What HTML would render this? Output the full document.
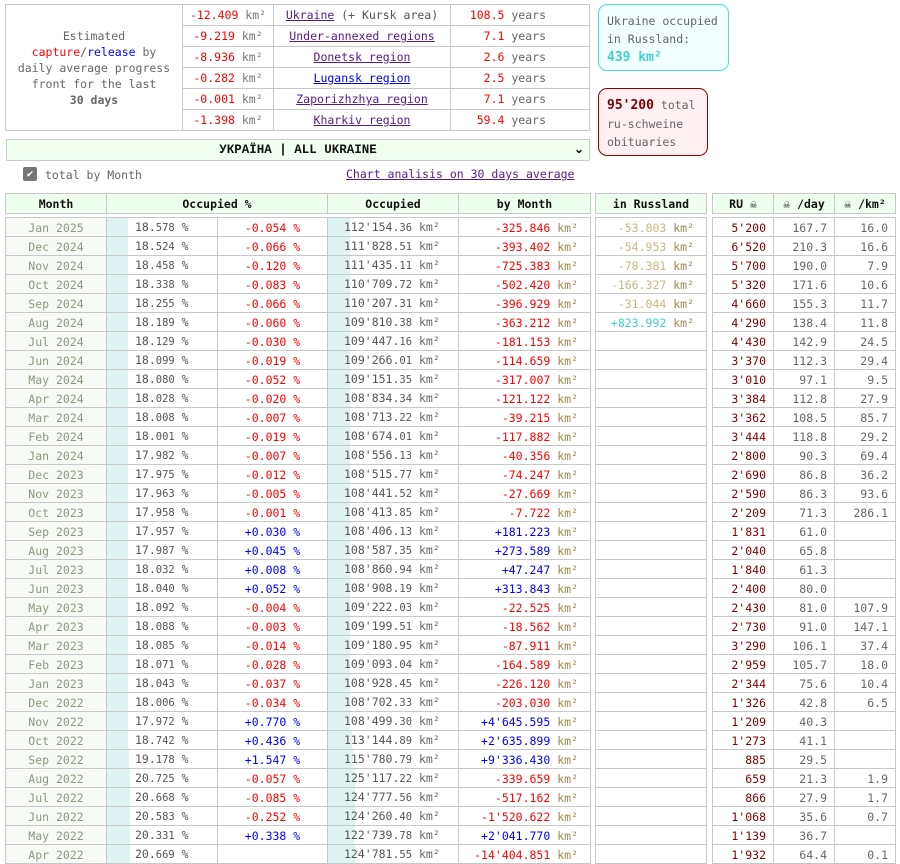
<!DOCTYPE html>
<html><head><meta charset="utf-8">
<style>
*{box-sizing:border-box}
body{margin:0;background:#fff;font-family:"DejaVu Sans Mono","Liberation Mono",monospace;font-size:11.5px;color:#555;width:900px;height:835px;overflow:hidden;position:relative}
.abs{position:absolute}
table{border-collapse:collapse;table-layout:fixed}
td{border:1px solid #c8c8c8;padding:0;white-space:nowrap;overflow:hidden}
#top{left:5px;top:4px;width:585px}
#top td{height:21px;line-height:20px}
#top .l{width:177px;text-align:center;color:#666;line-height:16px}
#top .v{width:91px;text-align:center;color:#f00}
#top .n{width:177px;text-align:center}
#top .y{text-align:right;padding-right:43px;color:#666}
#top .y b{color:#f00;font-weight:normal}
a{color:#551a8b;text-decoration:underline}
a.bl{color:#0000ee}
.km{color:#777}
.box{border-radius:9px;padding:7px 8px;line-height:18px;font-size:11.5px;color:#666}
#sel{left:6px;top:139px;width:584px;height:22px;background:#f0fff0;border:1px solid #ccc;font-family:"Liberation Mono",monospace;font-weight:bold;font-size:12.5px;color:#111;text-align:center;line-height:20px}
#hd,#bd{left:5px;width:890px}
#hd{top:193px}
#bd{top:217px}
#hd td{height:20px;background:#efffef;text-align:center;font-weight:bold;color:#111;line-height:18px}
#bd td{height:18px;line-height:16px;padding-top:1px}
#bd tr{height:18px}
td.g{border-top:0;border-bottom:0;background:#fff}
#hd td.g{background:#fff}
.m{text-align:center;color:#8a9a80;background:#f8faf5}
.p{text-align:left;padding-left:28px;color:#555;background:linear-gradient(#dff3f3,#dff3f3) no-repeat;background-size:21px 100%}
.c{text-align:center}
.o{text-align:left;padding-left:16px;color:#555;background:linear-gradient(#dff3f3,#dff3f3) no-repeat;background-size:22px 100%}
.b{text-align:right;padding-right:12px}
.r{text-align:right;padding-right:12px;color:#c8b880}
.u{text-align:right;padding-right:7px;color:#800000;font-weight:normal}
.d,.k{text-align:right;padding-right:7px;color:#666}
.s{font-size:10.5px}
.R{color:#f00}.B{color:#00f}
.b .km,.r .km{color:#a08850}
.o .km{color:#666}
.t{color:#40d0d0}
</style></head><body>
<table id="top" class="abs">
<tr><td class="l" rowspan="6">Estimated<br><span style="color:#f00">capture</span>/<span style="color:#00f">release</span> by<br>daily average progress<br>front for the last<br><b>30 days</b></td><td class="v">-12.409 <span class="km">km²</span></td><td class="n"><a>Ukraine</a> (+ Kursk area)</td><td class="y"><b>108.5</b> years</td></tr>
<tr><td class="v">-9.219 <span class="km">km²</span></td><td class="n"><a>Under-annexed regions</a></td><td class="y"><b>7.1</b> years</td></tr>
<tr><td class="v">-8.936 <span class="km">km²</span></td><td class="n"><a>Donetsk region</a></td><td class="y"><b>2.6</b> years</td></tr>
<tr><td class="v">-0.282 <span class="km">km²</span></td><td class="n"><a class="bl">Lugansk region</a></td><td class="y"><b>2.5</b> years</td></tr>
<tr><td class="v">-0.001 <span class="km">km²</span></td><td class="n"><a>Zaporizhzhya region</a></td><td class="y"><b>7.1</b> years</td></tr>
<tr><td class="v">-1.398 <span class="km">km²</span></td><td class="n"><a>Kharkiv region</a></td><td class="y"><b>59.4</b> years</td></tr>
</table>
<div class="abs box" style="left:598px;top:4px;width:131px;height:67px;border:1px solid #50e0d0;background:#f0ffff">Ukraine occupied in Russland:<br><b class="t" style="font-size:13px">439 km²</b></div>
<div class="abs box" style="left:598px;top:88px;width:110px;height:68px;border:1px solid #900000;background:#fff0f3"><b style="color:#800000;font-size:13px">95'200</b> total ru-schweine obituaries</div>
<div id="sel" class="abs">УКРАЇНА | ALL UKRAINE<span style="position:absolute;right:5px;top:0;font-size:12px">⌄</span></div>
<div class="abs" style="left:23px;top:167px;width:14px;height:14px;background:#777;border-radius:2px;color:#fff;font-size:11px;line-height:14px;text-align:center">✔</div>
<div class="abs" style="left:45px;top:167px;color:#666;line-height:16px">total by Month</div>
<div class="abs" style="left:346px;top:166px;line-height:16px"><a>Chart analisis on 30 days average</a></div>
<table id="hd" class="abs"><colgroup><col style="width:101px"><col style="width:221px"><col style="width:131px"><col style="width:132px"><col style="width:5px"><col style="width:111px"><col style="width:6px"><col style="width:61px"><col style="width:61px"><col style="width:61px"></colgroup>
<tr><td>Month</td><td>Occupied %</td><td>Occupied</td><td>by Month</td><td class="g"></td><td>in Russland</td><td class="g"></td><td>RU ☠</td><td>☠ /day</td><td>☠ /km²</td></tr></table>
<table id="bd" class="abs"><colgroup><col style="width:101px"><col style="width:111px"><col style="width:110px"><col style="width:131px"><col style="width:132px"><col style="width:5px"><col style="width:111px"><col style="width:6px"><col style="width:61px"><col style="width:61px"><col style="width:61px"></colgroup>
<tr><td class="m">Jan 2025</td><td class="p">18.<span class="s">578</span> %</td><td class="c R">-0.054 %</td><td class="o">112'154.<span class="s">36</span> <span class="km">km²</span></td><td class="b R">-325.846 <span class="km">km²</span></td><td class="g"></td><td class="r">-53.803 <span class="km">km²</span></td><td class="g"></td><td class="u">5'200</td><td class="d">167.7</td><td class="k">16.0</td></tr>
<tr><td class="m">Dec 2024</td><td class="p">18.<span class="s">524</span> %</td><td class="c R">-0.066 %</td><td class="o">111'828.<span class="s">51</span> <span class="km">km²</span></td><td class="b R">-393.402 <span class="km">km²</span></td><td class="g"></td><td class="r">-54.953 <span class="km">km²</span></td><td class="g"></td><td class="u">6'520</td><td class="d">210.3</td><td class="k">16.6</td></tr>
<tr><td class="m">Nov 2024</td><td class="p">18.<span class="s">458</span> %</td><td class="c R">-0.120 %</td><td class="o">111'435.<span class="s">11</span> <span class="km">km²</span></td><td class="b R">-725.383 <span class="km">km²</span></td><td class="g"></td><td class="r">-78.381 <span class="km">km²</span></td><td class="g"></td><td class="u">5'700</td><td class="d">190.0</td><td class="k">7.9</td></tr>
<tr><td class="m">Oct 2024</td><td class="p">18.<span class="s">338</span> %</td><td class="c R">-0.083 %</td><td class="o">110'709.<span class="s">72</span> <span class="km">km²</span></td><td class="b R">-502.420 <span class="km">km²</span></td><td class="g"></td><td class="r">-166.327 <span class="km">km²</span></td><td class="g"></td><td class="u">5'320</td><td class="d">171.6</td><td class="k">10.6</td></tr>
<tr><td class="m">Sep 2024</td><td class="p">18.<span class="s">255</span> %</td><td class="c R">-0.066 %</td><td class="o">110'207.<span class="s">31</span> <span class="km">km²</span></td><td class="b R">-396.929 <span class="km">km²</span></td><td class="g"></td><td class="r">-31.044 <span class="km">km²</span></td><td class="g"></td><td class="u">4'660</td><td class="d">155.3</td><td class="k">11.7</td></tr>
<tr><td class="m">Aug 2024</td><td class="p">18.<span class="s">189</span> %</td><td class="c R">-0.060 %</td><td class="o">109'810.<span class="s">38</span> <span class="km">km²</span></td><td class="b R">-363.212 <span class="km">km²</span></td><td class="g"></td><td class="r t">+823.992 <span class="km">km²</span></td><td class="g"></td><td class="u">4'290</td><td class="d">138.4</td><td class="k">11.8</td></tr>
<tr><td class="m">Jul 2024</td><td class="p">18.<span class="s">129</span> %</td><td class="c R">-0.030 %</td><td class="o">109'447.<span class="s">16</span> <span class="km">km²</span></td><td class="b R">-181.153 <span class="km">km²</span></td><td class="g"></td><td class="r"></td><td class="g"></td><td class="u">4'430</td><td class="d">142.9</td><td class="k">24.5</td></tr>
<tr><td class="m">Jun 2024</td><td class="p">18.<span class="s">099</span> %</td><td class="c R">-0.019 %</td><td class="o">109'266.<span class="s">01</span> <span class="km">km²</span></td><td class="b R">-114.659 <span class="km">km²</span></td><td class="g"></td><td class="r"></td><td class="g"></td><td class="u">3'370</td><td class="d">112.3</td><td class="k">29.4</td></tr>
<tr><td class="m">May 2024</td><td class="p">18.<span class="s">080</span> %</td><td class="c R">-0.052 %</td><td class="o">109'151.<span class="s">35</span> <span class="km">km²</span></td><td class="b R">-317.007 <span class="km">km²</span></td><td class="g"></td><td class="r"></td><td class="g"></td><td class="u">3'010</td><td class="d">97.1</td><td class="k">9.5</td></tr>
<tr><td class="m">Apr 2024</td><td class="p">18.<span class="s">028</span> %</td><td class="c R">-0.020 %</td><td class="o">108'834.<span class="s">34</span> <span class="km">km²</span></td><td class="b R">-121.122 <span class="km">km²</span></td><td class="g"></td><td class="r"></td><td class="g"></td><td class="u">3'384</td><td class="d">112.8</td><td class="k">27.9</td></tr>
<tr><td class="m">Mar 2024</td><td class="p">18.<span class="s">008</span> %</td><td class="c R">-0.007 %</td><td class="o">108'713.<span class="s">22</span> <span class="km">km²</span></td><td class="b R">-39.215 <span class="km">km²</span></td><td class="g"></td><td class="r"></td><td class="g"></td><td class="u">3'362</td><td class="d">108.5</td><td class="k">85.7</td></tr>
<tr><td class="m">Feb 2024</td><td class="p">18.<span class="s">001</span> %</td><td class="c R">-0.019 %</td><td class="o">108'674.<span class="s">01</span> <span class="km">km²</span></td><td class="b R">-117.882 <span class="km">km²</span></td><td class="g"></td><td class="r"></td><td class="g"></td><td class="u">3'444</td><td class="d">118.8</td><td class="k">29.2</td></tr>
<tr><td class="m">Jan 2024</td><td class="p">17.<span class="s">982</span> %</td><td class="c R">-0.007 %</td><td class="o">108'556.<span class="s">13</span> <span class="km">km²</span></td><td class="b R">-40.356 <span class="km">km²</span></td><td class="g"></td><td class="r"></td><td class="g"></td><td class="u">2'800</td><td class="d">90.3</td><td class="k">69.4</td></tr>
<tr><td class="m">Dec 2023</td><td class="p">17.<span class="s">975</span> %</td><td class="c R">-0.012 %</td><td class="o">108'515.<span class="s">77</span> <span class="km">km²</span></td><td class="b R">-74.247 <span class="km">km²</span></td><td class="g"></td><td class="r"></td><td class="g"></td><td class="u">2'690</td><td class="d">86.8</td><td class="k">36.2</td></tr>
<tr><td class="m">Nov 2023</td><td class="p">17.<span class="s">963</span> %</td><td class="c R">-0.005 %</td><td class="o">108'441.<span class="s">52</span> <span class="km">km²</span></td><td class="b R">-27.669 <span class="km">km²</span></td><td class="g"></td><td class="r"></td><td class="g"></td><td class="u">2'590</td><td class="d">86.3</td><td class="k">93.6</td></tr>
<tr><td class="m">Oct 2023</td><td class="p">17.<span class="s">958</span> %</td><td class="c R">-0.001 %</td><td class="o">108'413.<span class="s">85</span> <span class="km">km²</span></td><td class="b R">-7.722 <span class="km">km²</span></td><td class="g"></td><td class="r"></td><td class="g"></td><td class="u">2'209</td><td class="d">71.3</td><td class="k">286.1</td></tr>
<tr><td class="m">Sep 2023</td><td class="p">17.<span class="s">957</span> %</td><td class="c B">+0.030 %</td><td class="o">108'406.<span class="s">13</span> <span class="km">km²</span></td><td class="b B">+181.223 <span class="km">km²</span></td><td class="g"></td><td class="r"></td><td class="g"></td><td class="u">1'831</td><td class="d">61.0</td><td class="k"></td></tr>
<tr><td class="m">Aug 2023</td><td class="p">17.<span class="s">987</span> %</td><td class="c B">+0.045 %</td><td class="o">108'587.<span class="s">35</span> <span class="km">km²</span></td><td class="b B">+273.589 <span class="km">km²</span></td><td class="g"></td><td class="r"></td><td class="g"></td><td class="u">2'040</td><td class="d">65.8</td><td class="k"></td></tr>
<tr><td class="m">Jul 2023</td><td class="p">18.<span class="s">032</span> %</td><td class="c B">+0.008 %</td><td class="o">108'860.<span class="s">94</span> <span class="km">km²</span></td><td class="b B">+47.247 <span class="km">km²</span></td><td class="g"></td><td class="r"></td><td class="g"></td><td class="u">1'840</td><td class="d">61.3</td><td class="k"></td></tr>
<tr><td class="m">Jun 2023</td><td class="p">18.<span class="s">040</span> %</td><td class="c B">+0.052 %</td><td class="o">108'908.<span class="s">19</span> <span class="km">km²</span></td><td class="b B">+313.843 <span class="km">km²</span></td><td class="g"></td><td class="r"></td><td class="g"></td><td class="u">2'400</td><td class="d">80.0</td><td class="k"></td></tr>
<tr><td class="m">May 2023</td><td class="p">18.<span class="s">092</span> %</td><td class="c R">-0.004 %</td><td class="o">109'222.<span class="s">03</span> <span class="km">km²</span></td><td class="b R">-22.525 <span class="km">km²</span></td><td class="g"></td><td class="r"></td><td class="g"></td><td class="u">2'430</td><td class="d">81.0</td><td class="k">107.9</td></tr>
<tr><td class="m">Apr 2023</td><td class="p">18.<span class="s">088</span> %</td><td class="c R">-0.003 %</td><td class="o">109'199.<span class="s">51</span> <span class="km">km²</span></td><td class="b R">-18.562 <span class="km">km²</span></td><td class="g"></td><td class="r"></td><td class="g"></td><td class="u">2'730</td><td class="d">91.0</td><td class="k">147.1</td></tr>
<tr><td class="m">Mar 2023</td><td class="p">18.<span class="s">085</span> %</td><td class="c R">-0.014 %</td><td class="o">109'180.<span class="s">95</span> <span class="km">km²</span></td><td class="b R">-87.911 <span class="km">km²</span></td><td class="g"></td><td class="r"></td><td class="g"></td><td class="u">3'290</td><td class="d">106.1</td><td class="k">37.4</td></tr>
<tr><td class="m">Feb 2023</td><td class="p">18.<span class="s">071</span> %</td><td class="c R">-0.028 %</td><td class="o">109'093.<span class="s">04</span> <span class="km">km²</span></td><td class="b R">-164.589 <span class="km">km²</span></td><td class="g"></td><td class="r"></td><td class="g"></td><td class="u">2'959</td><td class="d">105.7</td><td class="k">18.0</td></tr>
<tr><td class="m">Jan 2023</td><td class="p">18.<span class="s">043</span> %</td><td class="c R">-0.037 %</td><td class="o">108'928.<span class="s">45</span> <span class="km">km²</span></td><td class="b R">-226.120 <span class="km">km²</span></td><td class="g"></td><td class="r"></td><td class="g"></td><td class="u">2'344</td><td class="d">75.6</td><td class="k">10.4</td></tr>
<tr><td class="m">Dec 2022</td><td class="p">18.<span class="s">006</span> %</td><td class="c R">-0.034 %</td><td class="o">108'702.<span class="s">33</span> <span class="km">km²</span></td><td class="b R">-203.030 <span class="km">km²</span></td><td class="g"></td><td class="r"></td><td class="g"></td><td class="u">1'326</td><td class="d">42.8</td><td class="k">6.5</td></tr>
<tr><td class="m">Nov 2022</td><td class="p">17.<span class="s">972</span> %</td><td class="c B">+0.770 %</td><td class="o">108'499.<span class="s">30</span> <span class="km">km²</span></td><td class="b B">+4'645.595 <span class="km">km²</span></td><td class="g"></td><td class="r"></td><td class="g"></td><td class="u">1'209</td><td class="d">40.3</td><td class="k"></td></tr>
<tr><td class="m">Oct 2022</td><td class="p">18.<span class="s">742</span> %</td><td class="c B">+0.436 %</td><td class="o" style="background-size:24px 100%">113'144.<span class="s">89</span> <span class="km">km²</span></td><td class="b B">+2'635.899 <span class="km">km²</span></td><td class="g"></td><td class="r"></td><td class="g"></td><td class="u">1'273</td><td class="d">41.1</td><td class="k"></td></tr>
<tr><td class="m">Sep 2022</td><td class="p" style="background-size:22px 100%">19.<span class="s">178</span> %</td><td class="c B">+1.547 %</td><td class="o" style="background-size:25px 100%">115'780.<span class="s">79</span> <span class="km">km²</span></td><td class="b B">+9'336.430 <span class="km">km²</span></td><td class="g"></td><td class="r"></td><td class="g"></td><td class="u">885</td><td class="d">29.5</td><td class="k"></td></tr>
<tr><td class="m">Aug 2022</td><td class="p" style="background-size:23px 100%">20.<span class="s">725</span> %</td><td class="c R">-0.057 %</td><td class="o" style="background-size:27px 100%">125'117.<span class="s">22</span> <span class="km">km²</span></td><td class="b R">-339.659 <span class="km">km²</span></td><td class="g"></td><td class="r"></td><td class="g"></td><td class="u">659</td><td class="d">21.3</td><td class="k">1.9</td></tr>
<tr><td class="m">Jul 2022</td><td class="p" style="background-size:23px 100%">20.<span class="s">668</span> %</td><td class="c R">-0.085 %</td><td class="o" style="background-size:27px 100%">124'777.<span class="s">56</span> <span class="km">km²</span></td><td class="b R">-517.162 <span class="km">km²</span></td><td class="g"></td><td class="r"></td><td class="g"></td><td class="u">866</td><td class="d">27.9</td><td class="k">1.7</td></tr>
<tr><td class="m">Jun 2022</td><td class="p" style="background-size:23px 100%">20.<span class="s">583</span> %</td><td class="c R">-0.252 %</td><td class="o" style="background-size:27px 100%">124'260.<span class="s">40</span> <span class="km">km²</span></td><td class="b R">-1'520.622 <span class="km">km²</span></td><td class="g"></td><td class="r"></td><td class="g"></td><td class="u">1'068</td><td class="d">35.6</td><td class="k">0.7</td></tr>
<tr><td class="m">May 2022</td><td class="p" style="background-size:23px 100%">20.<span class="s">331</span> %</td><td class="c B">+0.338 %</td><td class="o" style="background-size:26px 100%">122'739.<span class="s">78</span> <span class="km">km²</span></td><td class="b B">+2'041.770 <span class="km">km²</span></td><td class="g"></td><td class="r"></td><td class="g"></td><td class="u">1'139</td><td class="d">36.7</td><td class="k"></td></tr>
<tr><td class="m">Apr 2022</td><td class="p" style="background-size:23px 100%">20.<span class="s">669</span> %</td><td class="c"></td><td class="o" style="background-size:27px 100%">124'781.<span class="s">55</span> <span class="km">km²</span></td><td class="b R">-14'404.851 <span class="km">km²</span></td><td class="g"></td><td class="r"></td><td class="g"></td><td class="u">1'932</td><td class="d">64.4</td><td class="k">0.1</td></tr>
</table>
</body></html>
